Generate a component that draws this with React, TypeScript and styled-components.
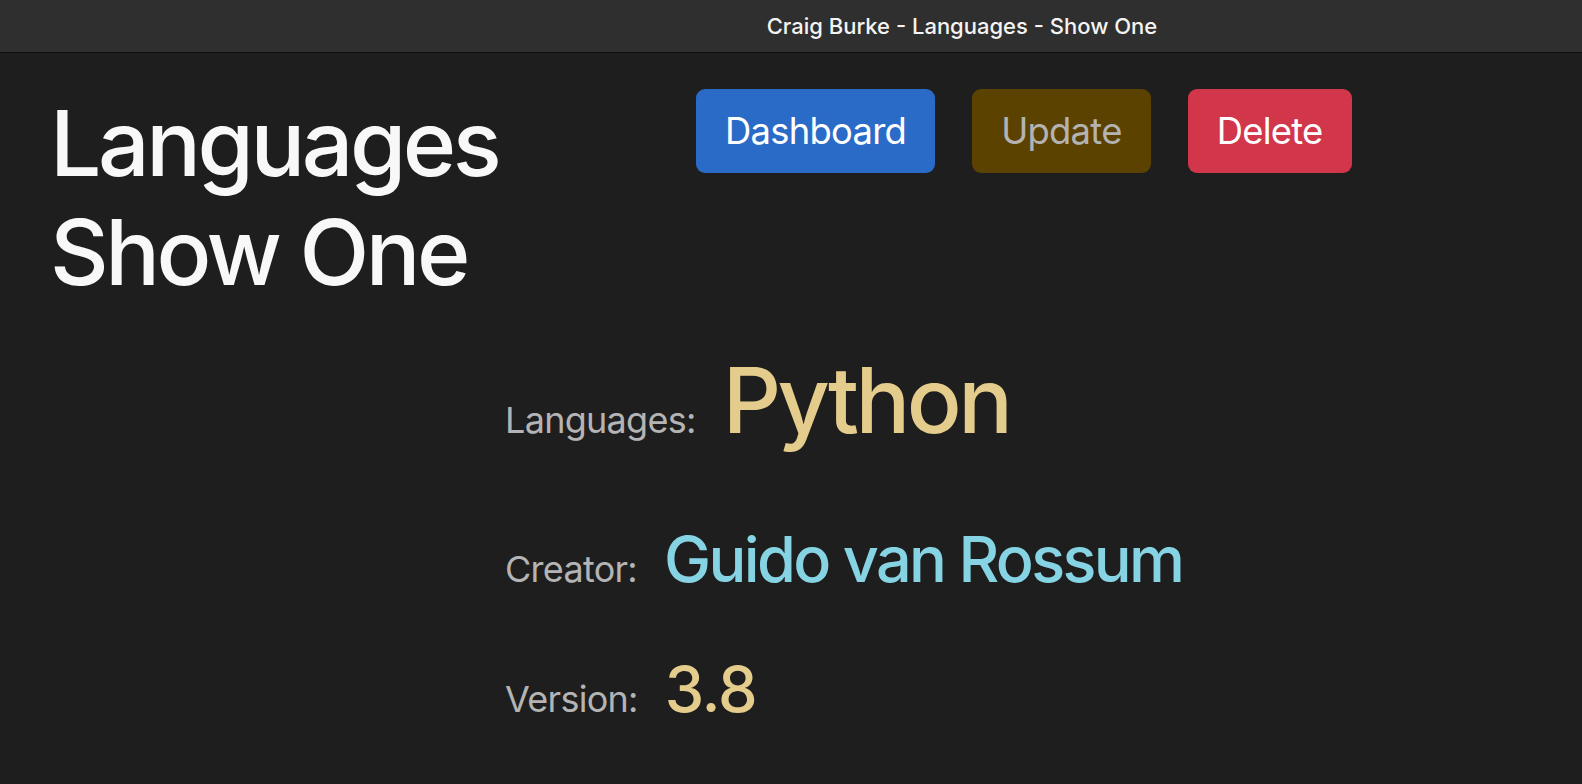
import styled, { createGlobalStyle } from 'styled-components'

const GlobalStyle = createGlobalStyle`
  html, body {
    margin: 0;
    padding: 0;
    background: #1e1e1e;
  }
  body {
    font-family: Inter, "Liberation Sans", sans-serif;
    color: #f8f8f8;
  }
`

const colors = {
  page: '#1e1e1e',
  chrome: '#2f2f2f',
  label: '#b4b4b4',
  gold: '#e4cc8c',
  cyan: '#86d3e3',
  blue: '#2a6bc7',
  brown: '#5c4200',
  red: '#d1364a',
}

const StyledWindow = styled.div`
  min-height: 784px;
  background: ${colors.page};
`

const StyledTitleBar = styled.div`
  height: 52px;
  display: flex;
  align-items: center;
  justify-content: center;
  padding-left: 342px;
  background: ${colors.chrome};
  border-bottom: 1px solid #0f0f0f;
  font-size: 22px;
  font-weight: 500;
  color: #f4f4f4;
`

const StyledContent = styled.main`
  padding: 36px 48px 0 50px;
`

const StyledHeader = styled.header`
  display: grid;
  grid-template-columns: 646px auto;
  align-items: start;
`

const StyledHeading = styled.h1`
  margin: 0;
  font-size: 91px;
  font-weight: 500;
  line-height: 1.2;
  letter-spacing: -0.038em;
`

const StyledButtonRow = styled.nav`
  display: flex;
  gap: 37px;
`

type Tone = 'primary' | 'warning' | 'danger'

const toneStyles: Record<Tone, { bg: string; fg: string }> = {
  primary: { bg: colors.blue, fg: '#ffffff' },
  warning: { bg: colors.brown, fg: '#b3b3b3' },
  danger: { bg: colors.red, fg: '#ffffff' },
}

const StyledButton = styled.button<{ $tone: Tone }>`
  height: 84px;
  padding: 0 29px;
  border: none;
  border-radius: 9px;
  background: ${(p) => toneStyles[p.$tone].bg};
  color: ${(p) => toneStyles[p.$tone].fg};
  font-family: inherit;
  font-size: 36.4px;
  font-weight: 400;
  letter-spacing: -0.02em;
  line-height: 1;
  cursor: pointer;
`

const StyledDetails = styled.section`
  margin-left: 455px;
  display: flex;
  flex-direction: column;
`

const StyledRow = styled.div<{ $space: number }>`
  display: flex;
  align-items: baseline;
  gap: 27px;
  margin-top: ${(p) => p.$space}px;
`

const StyledLabel = styled.span`
  font-size: 36px;
  line-height: 1.2;
  letter-spacing: -0.02em;
  color: ${colors.label};
`

const StyledValue = styled.span<{ $size: number; $color: string; $track: number }>`
  font-size: ${(p) => p.$size}px;
  font-weight: 500;
  line-height: 1.2;
  letter-spacing: ${(p) => p.$track}em;
  color: ${(p) => p.$color};
`

const details = [
  { label: 'Languages:', value: 'Python', size: 91, track: -0.038, color: colors.gold, space: 39 },
  { label: 'Creator:', value: 'Guido van Rossum', size: 63, track: -0.042, color: colors.cyan, space: 66 },
  { label: 'Version:', value: '3.8', size: 63, track: -0.02, color: colors.gold, space: 55 },
]

export default function App() {
  return (
    <StyledWindow>
      <GlobalStyle />
      <StyledTitleBar>Craig Burke - Languages - Show One</StyledTitleBar>
      <StyledContent>
        <StyledHeader>
          <StyledHeading>
            Languages
            <br />
            Show One
          </StyledHeading>
          <StyledButtonRow>
            <StyledButton $tone="primary">Dashboard</StyledButton>
            <StyledButton $tone="warning">Update</StyledButton>
            <StyledButton $tone="danger">Delete</StyledButton>
          </StyledButtonRow>
        </StyledHeader>
        <StyledDetails>
          {details.map((d) => (
            <StyledRow key={d.label} $space={d.space}>
              <StyledLabel>{d.label}</StyledLabel>
              <StyledValue $size={d.size} $color={d.color} $track={d.track}>
                {d.value}
              </StyledValue>
            </StyledRow>
          ))}
        </StyledDetails>
      </StyledContent>
    </StyledWindow>
  )
}
